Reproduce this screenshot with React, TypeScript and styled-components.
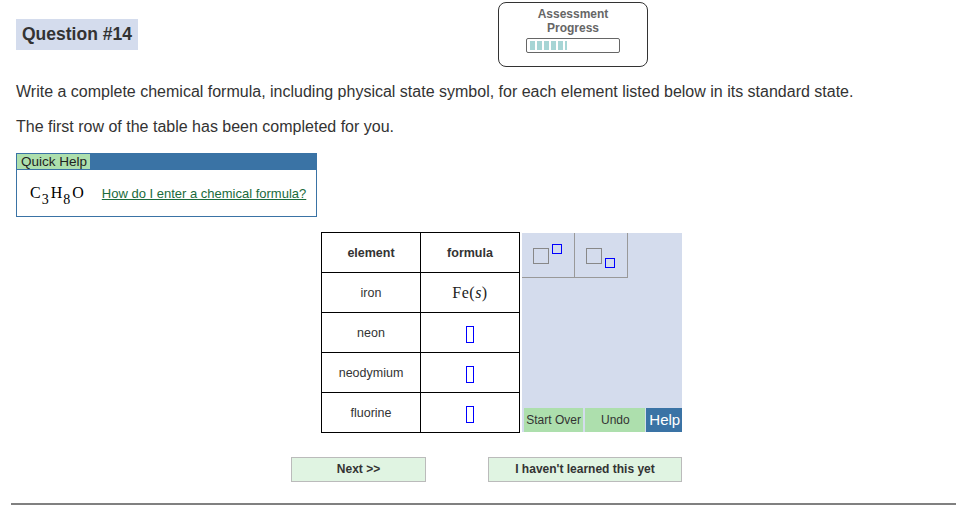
import React from 'react';
import styled, { createGlobalStyle } from 'styled-components';

const Global = createGlobalStyle`
    html, body {
        margin: 0;
        padding: 0;
        background: #fff;
        font-family: "Liberation Sans", Arial, sans-serif;
        color: #333;
    }
`;

const Page = styled.div`
    width: 956px;
    height: 530px;
    overflow: hidden;
`;

const Header = styled.div`
    display: flex;
    justify-content: space-between;
    align-items: flex-start;
    padding: 2px 308px 0 16px;
`;

const QuestionTitle = styled.div`
    margin-top: 17px;
    background: #d4dced;
    font-weight: bold;
    font-size: 17.5px;
    height: 31px;
    line-height: 31px;
    padding: 0 6px 0 6px;
    color: #333;
`;

const ProgressBox = styled.div`
    width: 150px;
    height: 65px;
    border: 1px solid #333;
    border-radius: 8px;
    display: flex;
    flex-direction: column;
    align-items: center;
    font-size: 12px;
    font-weight: bold;
    color: #666;
    line-height: 14px;
    padding-top: 4px;
    box-sizing: border-box;
`;

const ProgressBar = styled.div`
    margin-top: 3px;
    width: 94px;
    height: 15px;
    border: 1px solid #666;
    border-radius: 2px;
    box-sizing: border-box;
    display: flex;
    gap: 2px;
    padding: 2px 2px 2px 3px;
`;

const Seg = styled.span<{ $w?: number }>`
    display: block;
    width: ${p => p.$w ?? 5}px;
    height: 9px;
    background: #a6d5d5;
`;

const Prompt = styled.p<{ $top: number }>`
    margin: ${p => p.$top}px 0 0 0;
    padding-left: 16px;
    font-size: 16px;
    line-height: 18px;
    color: #333;
`;

const QuickHelp = styled.div`
    margin: 17px 0 0 16px;
    width: 301px;
    height: 64px;
    border: 1px solid #3a73a5;
    box-sizing: border-box;
    display: flex;
    flex-direction: column;
`;

const QHBar = styled.div`
    background: #3a73a5;
    height: 16px;
    display: flex;
`;

const QHLabel = styled.span`
    background: #addfad;
    color: #222;
    font-size: 13.5px;
    line-height: 15px;
    padding: 0 3px 0 4px;
    border-bottom: 1px solid #3a73a5;
`;

const QHBody = styled.div`
    flex: 1;
    display: flex;
    align-items: center;
    padding-left: 13px;
    gap: 18px;
`;

const Formula = styled.span`
    font-family: "Liberation Serif", "Times New Roman", serif;
    font-size: 16px;
    color: #000;
    sub {
        font-size: 14px;
        vertical-align: -6px;
        line-height: 0;
        margin: 0 2px 0 1px;
    }
`;

const HelpLink = styled.a`
    font-size: 13px;
    color: #1a6b3c;
    text-decoration: underline;
    margin-top: 1px;
`;

const Work = styled.div`
    display: flex;
    padding-left: 321px;
    margin-top: 15px;
    align-items: flex-start;
`;

const Table = styled.table`
    border-collapse: collapse;
    border: 1.5px solid #000;
    td, th {
        border: 1px solid #000;
        width: 98px;
        height: 39px;
        text-align: center;
        font-size: 12.5px;
        color: #333;
        padding: 0;
    }
    th {
        font-weight: bold;
    }
`;

const FeCell = styled.span`
    font-family: "Liberation Serif", "Times New Roman", serif;
    font-size: 16px;
    color: #222;
    letter-spacing: 0.5px;
`;

const Slot = styled.span`
    display: inline-block;
    width: 6px;
    height: 15px;
    border: 1px solid #0000ff;
    vertical-align: middle;
    margin-top: 3px;
`;

const Panel = styled.div`
    width: 160px;
    height: 199px;
    margin: 1px 0 0 2px;
    background: #d4dced;
    display: flex;
    flex-direction: column;
    justify-content: space-between;
`;

const Tools = styled.div`
    display: flex;
`;

const ToolBtn = styled.div`
    width: 52px;
    height: 44px;
    border-right: 1px solid #999;
    border-bottom: 1px solid #999;
`;

const Actions = styled.div`
    display: flex;
    gap: 1px;
    padding-left: 1px;
`;

const ActBtn = styled.div<{ $w: number; $blue?: boolean }>`
    width: ${p => p.$w}px;
    height: 24px;
    line-height: 24px;
    text-align: center;
    background: ${p => (p.$blue ? '#3a73a5' : '#addfad')};
    color: ${p => (p.$blue ? '#fff' : '#333')};
    font-size: ${p => (p.$blue ? 15 : 12)}px;
    border-left: 1px solid ${p => (p.$blue ? '#3a73a5' : '#d4dced')};
`;

const Nav = styled.div`
    display: flex;
    gap: 62px;
    padding-left: 291px;
    margin-top: 24px;
`;

const NavBtn = styled.div<{ $w: number }>`
    width: ${p => p.$w}px;
    height: 25px;
    box-sizing: border-box;
    border: 1px solid #bbb;
    background: #e0f4e2;
    text-align: center;
    line-height: 23px;
    font-size: 12px;
    font-weight: bold;
    color: #333;
`;

const Rule = styled.hr`
    margin: 21px 0 0 11px;
    border: none;
    height: 2px;
    background: #808080;
`;

const ScriptIcon = ({ sub }: { sub?: boolean }) => (
    <svg width="52" height="44" viewBox="0 0 52 44">
        <rect x="11.5" y="15.5" width="15" height="15" fill="none" stroke="#888" strokeWidth="1" />
        <rect x="30.5" y={sub ? 25.5 : 11.5} width="9" height="9" fill="none" stroke="#00f" strokeWidth="1" />
    </svg>
);

const rows = ['neon', 'neodymium', 'fluorine'];

export default function App() {
    return (
        <Page>
            <Global />
            <Header>
                <QuestionTitle>Question #14</QuestionTitle>
                <ProgressBox>
                    <span>Assessment</span>
                    <span>Progress</span>
                    <ProgressBar>
                        <Seg /><Seg /><Seg /><Seg /><Seg /><Seg $w={2} />
                    </ProgressBar>
                </ProgressBox>
            </Header>
            <Prompt $top={16}>
                Write a complete chemical formula, including physical state symbol, for each element listed below in its standard state.
            </Prompt>
            <Prompt $top={17}>The first row of the table has been completed for you.</Prompt>
            <QuickHelp>
                <QHBar>
                    <QHLabel>Quick Help</QHLabel>
                </QHBar>
                <QHBody>
                    <Formula>
                        C<sub>3</sub>H<sub>8</sub>O
                    </Formula>
                    <HelpLink href="#">How do I enter a chemical formula?</HelpLink>
                </QHBody>
            </QuickHelp>
            <Work>
                <Table>
                    <tbody>
                        <tr>
                            <th>element</th>
                            <th>formula</th>
                        </tr>
                        <tr>
                            <td>iron</td>
                            <td>
                                <FeCell>
                                    Fe(<i>s</i>)
                                </FeCell>
                            </td>
                        </tr>
                        {rows.map(r => (
                            <tr key={r}>
                                <td>{r}</td>
                                <td>
                                    <Slot />
                                </td>
                            </tr>
                        ))}
                    </tbody>
                </Table>
                <Panel>
                    <Tools>
                        <ToolBtn>
                            <ScriptIcon />
                        </ToolBtn>
                        <ToolBtn>
                            <ScriptIcon sub />
                        </ToolBtn>
                    </Tools>
                    <Actions>
                        <ActBtn $w={60}>Start Over</ActBtn>
                        <ActBtn $w={61}>Undo</ActBtn>
                        <ActBtn $w={35} $blue>Help</ActBtn>
                    </Actions>
                </Panel>
            </Work>
            <Nav>
                <NavBtn $w={135}>Next &gt;&gt;</NavBtn>
                <NavBtn $w={194}>I haven't learned this yet</NavBtn>
            </Nav>
            <Rule />
        </Page>
    );
}
